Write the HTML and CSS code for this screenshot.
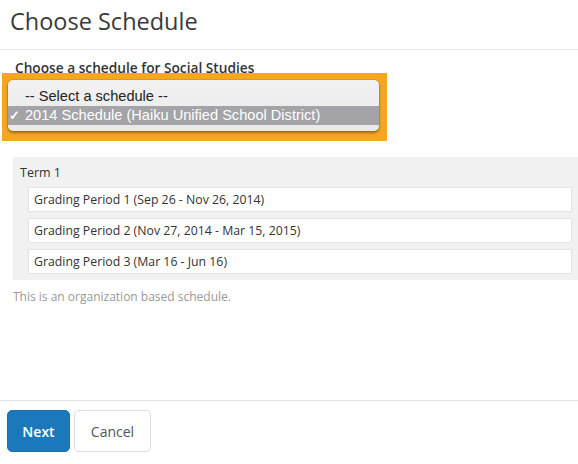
FILE: index.html
```html
<!DOCTYPE html>
<html>
<head>
<meta charset="utf-8">
<title>Choose Schedule</title>
<link rel="stylesheet" href="styles.css">
</head>
<body>
<div class="dialog">
  <header class="header">
    <h1 class="title">Choose Schedule</h1>
  </header>
  <main class="content">
    <div class="label">Choose a schedule for Social Studies</div>
    <div class="highlight">
      <div class="menu">
        <div class="option"><span class="check"></span><span>-- Select a schedule --</span></div>
        <div class="option selected"><span class="check">✓</span><span>2014 Schedule (Haiku Unified School District)</span></div>
      </div>
    </div>
    <div class="term">
      <div class="term-name">Term 1</div>
      <div class="periods">
        <div class="period">Grading Period 1 (Sep 26 - Nov 26, 2014)</div>
        <div class="period">Grading Period 2 (Nov 27, 2014 - Mar 15, 2015)</div>
        <div class="period">Grading Period 3 (Mar 16 - Jun 16)</div>
      </div>
    </div>
    <p class="note">This is an organization based schedule.</p>
  </main>
  <footer class="footer">
    <button class="btn btn-primary">Next</button>
    <button class="btn btn-default">Cancel</button>
  </footer>
</div>
</body>
</html>
```
FILE: styles.css
```css
* { box-sizing: border-box; }
html, body { margin: 0; padding: 0; background: #fff; }
body {
  font-family: "Open Sans", "Liberation Sans", sans-serif;
  color: #333;
  overflow: hidden;
}
.dialog {
  height: 464px;
  display: flex;
  flex-direction: column;
}
.header {
  height: 50px;
  padding: 6px 10px 0;
  border-bottom: 1px solid #e5e5e5;
}
.title {
  margin: 0;
  font-size: 23.5px;
  line-height: 30px;
  font-weight: 400;
  color: #3a3a3a;
}
.content {
  flex: 1;
  padding: 9px 0 0 13px;
}
.label {
  padding-left: 2px;
  font-size: 13.7px;
  font-weight: 600;
  line-height: 18px;
  color: #333;
}
.highlight {
  margin: -4px 0 0 -11px;
  width: 385px;
  padding: 7px 8px 10px 6px;
  background: #f5a623;
}
.menu {
  background: linear-gradient(#f2f2f2, #e9e9e9);
  border-radius: 5px;
  padding: 6px 0;
  box-shadow: 0 2px 3px rgba(0,0,0,0.35), 0 0 0 1px rgba(0,0,0,0.08);
  font-family: "Liberation Sans", Arial, sans-serif;
  font-size: 14.6px;
  color: #222;
}
.option {
  display: flex;
  height: 20px;
  line-height: 20px;
}
.option.selected {
  height: 19px;
  line-height: 19px;
  background: #a3a3a8;
  color: #fff;
}
.check {
  width: 17px;
  padding-left: 1px;
  font-size: 13px;
  font-weight: 700;
}
.term {
  margin-top: 16px;
  background: #f1f1f1;
  padding: 6px 6px 6px 15px;
}
.term-name {
  margin-left: -8px;
  font-size: 12.5px;
  line-height: 20px;
  height: 24px;
}
.periods {
  display: flex;
  flex-direction: column;
  gap: 6px;
}
.period {
  height: 25px;
  line-height: 23px;
  padding-left: 5px;
  background: #fff;
  border: 1px solid #e4e4e4;
  font-size: 12.3px;
  color: #333;
}
.note {
  margin: 8px 0 0;
  font-size: 12px;
  line-height: 18px;
  color: #999;
}
.footer {
  border-top: 1px solid #e5e5e5;
  padding: 9px 7px 0;
  height: 64px;
  display: flex;
  gap: 4px;
  align-items: flex-start;
}
.btn {
  height: 42px;
  padding: 0 10px;
  border-radius: 5px;
  font-family: "Open Sans", "Liberation Sans", sans-serif;
  font-size: 14px;
  cursor: pointer;
}
.btn-primary {
  background: #1b79bb;
  border: 1px solid #1a70ad;
  color: #fff;
  font-weight: 600;
  width: 63px;
}
.btn-default {
  background: #fff;
  border: 1px solid #dcdcdc;
  color: #555;
  width: 77px;
}
```
